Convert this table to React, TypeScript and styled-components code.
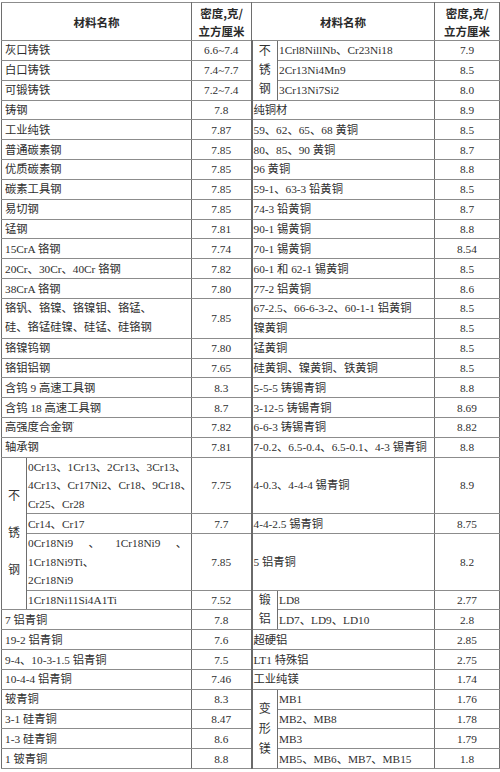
import React from "react";
import styled, { createGlobalStyle } from "styled-components";

const GlobalStyle = createGlobalStyle`
  html, body { margin: 0; padding: 0; background: #ffffff; }
`;

const Page = styled.div`
  padding: 2px 0 0 1px;
  width: 500px;
  box-sizing: border-box;
`;

const Table = styled.table`
  border-collapse: collapse;
  table-layout: fixed;
  width: 498px;
  font-family: "Liberation Serif", "Noto Sans CJK SC", serif;
  font-size: 11.3px;
  color: #2e2e2e;
`;

const Row = styled.tr<{ $h?: number }>`
  height: ${(p) => p.$h ?? 19.85}px;
`;

const cellBase = `
  border: 1px solid #8c8c8c;
  border-left-color: #6e6e6e;
  border-right-color: #6e6e6e;
  padding: 0;
  white-space: nowrap;
  overflow: hidden;
  vertical-align: middle;
`;

const Head = styled.th`
  ${cellBase}
  font-family: "Noto Sans CJK SC", sans-serif;
  font-weight: 700;
  font-size: 11.5px;
  line-height: 18px;
  text-align: center;
  color: #2a2a2a;
`;

const Name = styled.td<{ $pad?: number; $lh?: number }>`
  ${cellBase}
  text-align: left;
  padding-left: ${(p) => p.$pad ?? 3}px;
  line-height: ${(p) => p.$lh ?? 18}px;
`;

const Val = styled.td<{ $mid?: boolean }>`
  ${cellBase}
  text-align: center;
  line-height: 18px;
  ${(p) => (p.$mid ? "border-right: 2px solid #6a6a6a;" : "")}
`;

const Label = styled.td<{ $lh: number }>`
  ${cellBase}
  text-align: center;
  line-height: ${(p) => p.$lh}px;
  font-size: 12px;
  color: #333;
`;

const Column = styled.col<{ $w: number }>`
  width: ${(p) => p.$w}px;
`;

const Spread = styled.span`
  display: flex;
  justify-content: space-between;
  padding-right: 4px;
`;

const Tick = styled.sup`
  font-size: 7px;
  line-height: 0;
`;

type SimpleProps = {
  l: React.ReactNode;
  lv: string;
  r: React.ReactNode;
  rv: string;
};

const SimpleRow = ({ l, lv, r, rv }: SimpleProps) => (
  <Row>
    <Name colSpan={2}>{l}</Name>
    <Val $mid>{lv}</Val>
    <Name colSpan={2} $pad={1}>{r}</Name>
    <Val>{rv}</Val>
  </Row>
);

const Lines = ({ items }: { items: React.ReactNode[] }) => (
  <>
    {items.map((t, i) => (
      <React.Fragment key={i}>
        {i > 0 && <br />}
        {t}
      </React.Fragment>
    ))}
  </>
);

const middle: [string, string, string, string][] = [
  ["铸钢", "7.8", "纯铜材", "8.9"],
  ["工业纯铁", "7.87", "59、62、65、68 黄铜", "8.5"],
  ["普通碳素钢", "7.85", "80、85、90 黄铜", "8.7"],
  ["优质碳素钢", "7.85", "96 黄铜", "8.8"],
  ["碳素工具钢", "7.85", "59-1、63-3 铅黄铜", "8.5"],
  ["易切钢", "7.85", "74-3 铅黄铜", "8.7"],
  ["锰钢", "7.81", "90-1 锡黄铜", "8.8"],
  ["15CrA 铬钢", "7.74", "70-1 锡黄铜", "8.54"],
  ["20Cr、30Cr、40Cr 铬钢", "7.82", "60-1 和 62-1 锡黄铜", "8.5"],
  ["38CrA 铬钢", "7.80", "77-2 铝黄铜", "8.6"],
];

const afterAlloy: [React.ReactNode, string, string, string][] = [
  ["铬镍钨钢", "7.80", "锰黄铜", "8.5"],
  ["铬钼铝钢", "7.65", "硅黄铜、镍黄铜、铁黄铜", "8.5"],
  ["含钨 9 高速工具钢", "8.3", "5-5-5 铸锡青铜", "8.8"],
  ["含钨 18 高速工具钢", "8.7", "3-12-5 铸锡青铜", "8.69"],
  [
    <>
      高强度合金钢<Tick>'</Tick>
    </>,
    "7.82",
    "6-6-3 铸锡青铜",
    "8.82",
  ],
  ["轴承钢", "7.81", "7-0.2、6.5-0.4、6.5-0.1、4-3 锡青铜", "8.8"],
];

const bronze: [string, string, string, string][] = [
  ["19-2 铝青铜", "7.6", "超硬铝", "2.85"],
  ["9-4、10-3-1.5 铝青铜", "7.5", "LT1 特殊铝", "2.75"],
  ["10-4-4 铝青铜", "7.46", "工业纯镁", "1.74"],
];

const magnesium: [string, string, string, string][] = [
  ["3-1 硅青铜", "8.47", "MB2、MB8", "1.78"],
  ["1-3 硅青铜", "8.6", "MB3", "1.79"],
  ["1 铍青铜", "8.8", "MB5、MB6、MB7、MB15", "1.8"],
];

export default function App() {
  return (
    <Page>
      <GlobalStyle />
      <Table>
        <colgroup>
          <Column $w={25} />
          <Column $w={165} />
          <Column $w={60} />
          <Column $w={26} />
          <Column $w={157} />
          <Column $w={65} />
        </colgroup>
        <tbody>
          <Row $h={38}>
            <Head colSpan={2}>材料名称</Head>
            <Head>
              密度,克/
              <br />
              立方厘米
            </Head>
            <Head colSpan={2}>材料名称</Head>
            <Head>
              密度,克/
              <br />
              立方厘米
            </Head>
          </Row>

          <Row>
            <Name colSpan={2}>灰口铸铁</Name>
            <Val $mid>6.6~7.4</Val>
            <Label rowSpan={3} $lh={19}>
              <Lines items={["不", "锈", "钢"]} />
            </Label>
            <Name $pad={1}>1Crl8NillNb、Cr23Ni18</Name>
            <Val>7.9</Val>
          </Row>
          <Row>
            <Name colSpan={2}>白口铸铁</Name>
            <Val $mid>7.4~7.7</Val>
            <Name $pad={1}>2Cr13Ni4Mn9</Name>
            <Val>8.5</Val>
          </Row>
          <Row>
            <Name colSpan={2}>可锻铸铁</Name>
            <Val $mid>7.2~7.4</Val>
            <Name $pad={1}>3Cr13Ni7Si2</Name>
            <Val>8.0</Val>
          </Row>

          {middle.map(([l, lv, r, rv]) => (
            <SimpleRow key={r} l={l} lv={lv} r={r} rv={rv} />
          ))}

          <Row>
            <Name colSpan={2} rowSpan={2} $lh={19}>
              <Lines
                items={["铬钒、铬镍、铬镍钼、铬锰、", "硅、铬锰硅镍、硅锰、硅铬钢"]}
              />
            </Name>
            <Val rowSpan={2} $mid>
              7.85
            </Val>
            <Name colSpan={2} $pad={1}>
              67-2.5、66-6-3-2、60-1-1 铝黄铜
            </Name>
            <Val>8.5</Val>
          </Row>
          <Row>
            <Name colSpan={2} $pad={1}>
              镍黄铜
            </Name>
            <Val>8.5</Val>
          </Row>

          {afterAlloy.map(([l, lv, r, rv]) => (
            <SimpleRow key={r} l={l} lv={lv} r={r} rv={rv} />
          ))}

          <Row $h={56.5}>
            <Label rowSpan={4} $lh={37}>
              <Lines items={["不", "锈", "钢"]} />
            </Label>
            <Name $pad={1} $lh={18.5}>
              <Lines
                items={[
                  "0Cr13、1Cr13、2Cr13、3Cr13、",
                  "4Cr13、Cr17Ni2、Cr18、9Cr18、",
                  "Cr25、Cr28",
                ]}
              />
            </Name>
            <Val $mid>7.75</Val>
            <Name colSpan={2} $pad={1}>
              4-0.3、4-4-4 锡青铜
            </Name>
            <Val>8.9</Val>
          </Row>
          <Row>
            <Name $pad={1}>Cr14、Cr17</Name>
            <Val $mid>7.7</Val>
            <Name colSpan={2} $pad={1}>
              4-4-2.5 锡青铜
            </Name>
            <Val>8.75</Val>
          </Row>
          <Row $h={56.5}>
            <Name $pad={1} $lh={18.5}>
              <Spread>
                <span>0Cr18Ni9</span>
                <span>、</span>
                <span>1Cr18Ni9</span>
                <span>、</span>
              </Spread>
              1Cr18Ni9Ti、
              <br />
              2Cr18Ni9
            </Name>
            <Val $mid>7.85</Val>
            <Name colSpan={2} $pad={1}>
              5 铝青铜
            </Name>
            <Val>8.2</Val>
          </Row>
          <Row>
            <Name $pad={1}>1Cr18Ni11Si4A1Ti</Name>
            <Val $mid>7.52</Val>
            <Label rowSpan={2} $lh={19}>
              <Lines items={["锻", "铝"]} />
            </Label>
            <Name $pad={1}>LD8</Name>
            <Val>2.77</Val>
          </Row>
          <Row>
            <Name colSpan={2}>7 铝青铜</Name>
            <Val $mid>7.8</Val>
            <Name $pad={1}>LD7、LD9、LD10</Name>
            <Val>2.8</Val>
          </Row>

          {bronze.map(([l, lv, r, rv]) => (
            <SimpleRow key={r} l={l} lv={lv} r={r} rv={rv} />
          ))}

          <Row>
            <Name colSpan={2}>铍青铜</Name>
            <Val $mid>8.3</Val>
            <Label rowSpan={4} $lh={20}>
              <Lines items={["变", "形", "镁"]} />
            </Label>
            <Name $pad={1}>MB1</Name>
            <Val>1.76</Val>
          </Row>
          {magnesium.map(([l, lv, r, rv]) => (
            <Row key={r}>
              <Name colSpan={2}>{l}</Name>
              <Val $mid>{lv}</Val>
              <Name $pad={1}>{r}</Name>
              <Val>{rv}</Val>
            </Row>
          ))}
        </tbody>
      </Table>
    </Page>
  );
}
